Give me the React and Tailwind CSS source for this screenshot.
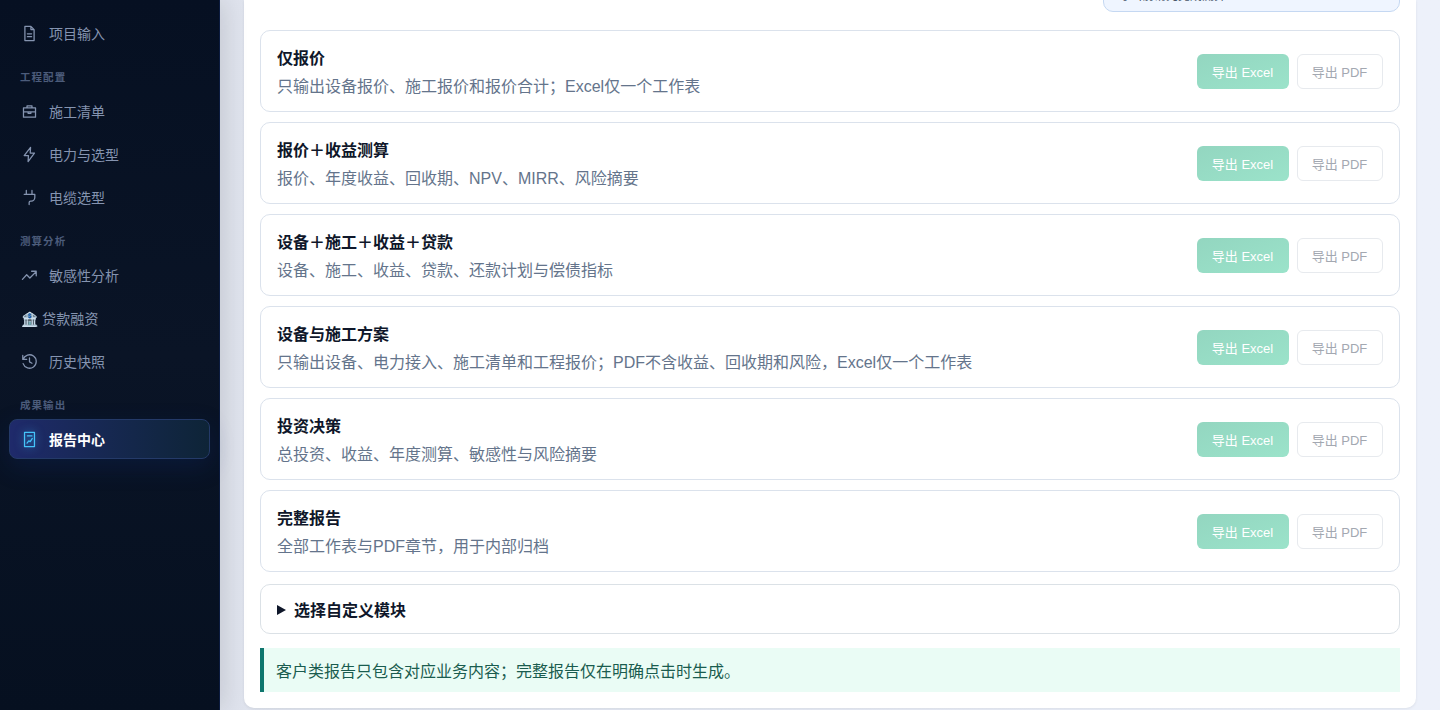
import React from "react";

const stroke = { fill: "none", stroke: "currentColor", strokeWidth: 1.8, strokeLinecap: "round", strokeLinejoin: "round" };

const icons = {
  doc: <path d="M5.500 2H14l4.500 4.500V22h-13zM14 2v4.500h4.500M9 12.500h6M9 16.500h6" />,
  toolbox: <path d="M3.500 7h17v13h-17zM8.500 7V4h7v3M3.500 12.500h17M10 12.500v2h4v-2" />,
  bolt: <path d="M13.500 2 4.500 13.500h6L10 22l9-12h-6z" />,
  plug: <path d="M7.500 2v5.500M15.500 2v5.500M4.500 7.500h15V12a5 5 0 0 1-5 5h-1a2 2 0 0 0-2 2v3" />,
  trend: <path d="M2 17.500l6-6.500 4.500 4.500L21.500 6.500M15 6h6.500v6.500" />,
  history: <path d="M2.500 3.500V9H8M3 9A9.500 9.500 0 1 1 3 15M12 7v5.500l3.500 2" />,
  report: <path d="M5 2h14v20H5zM9 7h6.500M8.500 17l2.500-3 2 1 3-4.500" />,
};

function NavItem({ icon, label, active, emoji }) {
  return (
    <a
      className={
        active
          ? "-mt-px flex h-10 w-[201px] items-center gap-[11px] rounded-lg border border-[#243a68] bg-linear-to-r from-[#1f2a6b] to-[#0e2437] pl-[11px] pt-[2px] text-[14px] font-semibold text-white shadow-[0_8px_24px_rgba(20,50,130,0.22)]"
          : "flex h-10 w-[201px] items-center gap-[11px] pl-[12px] text-[14px] text-[#8594b0]"
      }
    >
      {emoji ? (
        <span className="tracking-[0.1px]">{emoji} {label}</span>
      ) : (
        <>
          <svg viewBox="0 0 24 24" className={active ? "-mt-px size-[17px] text-[#45c4fa] drop-shadow-[0_0_4px_rgba(56,189,248,0.6)]" : "-mt-px size-[17px]"} {...stroke}>
            {icons[icon]}
          </svg>
          <span>{label}</span>
        </>
      )}
    </a>
  );
}

function Group({ title, children }) {
  return (
    <section>
      <h3 className="mb-2 h-[14px] pl-[11px] text-[10.5px] font-bold leading-[14px] tracking-[1.05px] text-[#4c5c7b]">{title}</h3>
      <div className="flex flex-col gap-[3px]">{children}</div>
    </section>
  );
}

const reports = [
  ["仅报价", "只输出设备报价、施工报价和报价合计；Excel仅一个工作表"],
  ["报价＋收益测算", "报价、年度收益、回收期、NPV、MIRR、风险摘要"],
  ["设备＋施工＋收益＋贷款", "设备、施工、收益、贷款、还款计划与偿债指标"],
  ["设备与施工方案", "只输出设备、电力接入、施工清单和工程报价；PDF不含收益、回收期和风险，Excel仅一个工作表"],
  ["投资决策", "总投资、收益、年度测算、敏感性与风险摘要"],
  ["完整报告", "全部工作表与PDF章节，用于内部归档"],
];

function ReportCard({ title, text }) {
  return (
    <article className="flex h-[82px] items-center justify-between rounded-[10px] border border-[#dbe2ec] px-4">
      <div className="pt-1">
        <h4 className="text-[16px] font-bold leading-7 text-[#0f172a]">{title}</h4>
        <p className="text-[16px] leading-7 text-[#64748b]">{text}</p>
      </div>
      <div className="flex gap-2 text-[13px]">
        <button className="h-[35px] w-[92px] rounded-md bg-linear-to-br from-[#93d6c0] to-[#9be3ca] pr-px pt-[4px] text-white">导出 Excel</button>
        <button className="h-[35px] w-[86px] rounded-md border border-[#e7eaee] bg-white pr-px pt-[4px] text-[#a3a8b1]">导出 PDF</button>
      </div>
    </article>
  );
}

export default function App() {
  return (
    <div className="flex h-[710px] w-full overflow-hidden bg-linear-to-r from-[#dfe3ed] from-15% to-[#edf1fa] to-90% font-['Liberation_Sans','Noto_Sans_CJK_SC',sans-serif]">
      <aside className="relative z-10 flex h-full w-[220px] shrink-0 flex-col gap-4 border-r border-[#0c1c40] bg-linear-to-b from-[#061022] via-[#0a1426] to-[#061020] pl-[9px] pt-[14px] shadow-[4px_0_24px_rgba(0,0,0,0.12)]">
        <NavItem icon="doc" label="项目输入" />
        <Group title="工程配置">
          <NavItem icon="toolbox" label="施工清单" />
          <NavItem icon="bolt" label="电力与选型" />
          <NavItem icon="plug" label="电缆选型" />
        </Group>
        <Group title="测算分析">
          <NavItem icon="trend" label="敏感性分析" />
          <NavItem emoji="🏦" label="贷款融资" />
          <NavItem icon="history" label="历史快照" />
        </Group>
        <Group title="成果输出">
          <NavItem icon="report" label="报告中心" active />
        </Group>
      </aside>
      <main className="h-[708px] flex-1 px-6">
        <div className="flex h-full flex-col rounded-b-[10px] bg-white px-4 shadow-[0_1px_3px_rgba(15,23,42,0.08)]">
          <div className="flex h-3 shrink-0 items-end justify-end overflow-hidden">
            <div className="flex h-10 w-[297px] shrink-0 items-end rounded-[10px] border border-[#c5d8f2] bg-[#eff5ff] px-[14px] pb-[6px] text-[12px] leading-[18px] text-[#475569]">
              <span>导出前请先完成测算</span>
            </div>
          </div>
          <div className="mt-[18px] flex flex-col gap-[10px]">
            {reports.map(([title, text]) => <ReportCard key={title} title={title} text={text} />)}
          </div>
          <div className="mt-3 flex h-[50px] shrink-0 items-center gap-2 rounded-[10px] border border-[#dbe1e6] px-4 text-[16px] font-bold text-[#0f172a]">
            <svg viewBox="0 0 9 10" className="mt-[2px] h-[10px] w-[9px]"><path d="M0 0 9 5 0 10z" fill="currentColor" /></svg>
            <span className="pt-1">选择自定义模块</span>
          </div>
          <p className="mt-[14px] flex h-11 shrink-0 items-center border-l-4 border-[#0f766e] bg-[#eafcf5] pl-3 pt-1 text-[16px] text-[#1a5c4f]">
            客户类报告只包含对应业务内容；完整报告仅在明确点击时生成。
          </p>
        </div>
      </main>
    </div>
  );
}
